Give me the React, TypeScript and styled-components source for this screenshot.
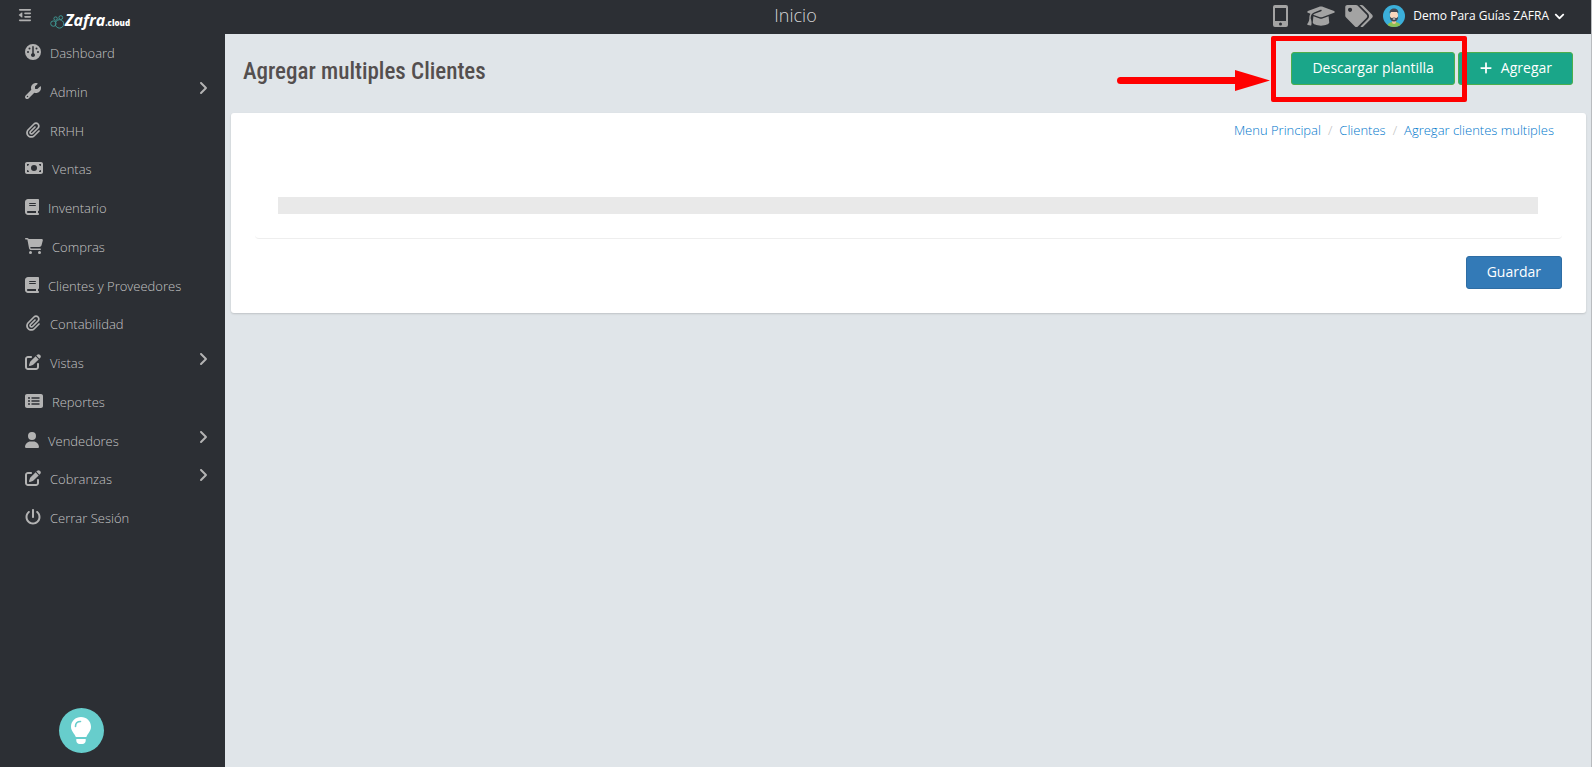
import React from 'react';
import styled, { createGlobalStyle } from 'styled-components';
import type { IconType } from 'react-icons';
import {
  FaOutdent, FaGauge, FaWrench, FaPaperclip, FaMoneyBill, FaBook, FaCartShopping,
  FaPenToSquare, FaRectangleList, FaUser, FaPowerOff, FaAngleRight,
  FaGraduationCap, FaPlus,
} from 'react-icons/fa6';
import { FaTags, FaChevronDown } from 'react-icons/fa';

const GlobalStyle = createGlobalStyle`
  *, *::before, *::after { box-sizing: border-box; }
  body {
    margin: 0;
    background: #e0e5e9;
    font-family: 'Open Sans', 'Noto Sans', sans-serif;
    font-size: 13px;
    line-height: 20px;
  }
  a { text-decoration: none; }
  button { font-family: inherit; cursor: pointer; }
`;

const Page = styled.div`
  min-height: 100vh;
  display: flex;
  flex-direction: column;
  border-right: 1px solid #b9bcbf;
`;

const TopBar = styled.header`
  display: grid;
  grid-template-columns: 1fr auto 1fr;
  height: 34px;
  background: #2c2f34;
`;

const Brand = styled.div`
  display: flex;
  align-items: flex-start;
  padding-left: 18px;
  gap: 18px;
`;

const CollapseButton = styled.button`
  display: flex;
  margin-top: 8px;
  padding: 0;
  border: 0;
  background: none;
  color: #b0b0b0;
  font-size: 14px;
`;

const Logo = styled.a`
  display: flex;
  align-items: baseline;
  margin-top: 8px;
  line-height: 24px;
  color: #fff;
`;

const LogoMark = styled.svg`
  width: 15px;
  height: 14px;
  align-self: center;
`;

const LogoName = styled.span`
  font-size: 16px;
  font-weight: 700;
  font-style: italic;
`;

const LogoSuffix = styled.span`
  font-size: 8px;
  font-weight: 800;
`;

const Section = styled.div`
  color: #d6d6d6;
  font-size: 18px;
  font-weight: 300;
  line-height: 30px;
`;

const Tools = styled.div`
  display: flex;
  justify-content: flex-end;
  align-items: center;
  height: 32px;
  padding-right: 26px;
`;

const ToolLink = styled.a<{ $width: number; $gap: number }>`
  display: flex;
  margin-right: ${(p) => p.$gap}px;
  color: #a3a3a3;
  svg { width: ${(p) => p.$width}px; height: 22px; }
`;

const UserButton = styled.button`
  display: flex;
  align-items: center;
  padding: 0;
  border: 0;
  background: none;
  color: #fff;
  font-size: 12px;
  line-height: 20px;
  svg:first-child { width: 22px; height: 22px; }
  svg:last-child { width: 11px; height: 11px; }
`;

const UserName = styled.span`
  padding: 0 5px 0 8px;
`;

const Body = styled.div`
  display: flex;
  flex: 1;
`;

const Sidebar = styled.aside`
  display: flex;
  flex-direction: column;
  justify-content: space-between;
  flex: 0 0 225px;
  background: #2c2f34;
`;

const Menu = styled.ul`
  display: flex;
  flex-direction: column;
  height: 504px;
  margin: 0;
  padding: 0;
  list-style: none;
`;

const MenuItem = styled.li`
  flex: 1;
`;

const MenuLink = styled.a`
  display: flex;
  align-items: center;
  height: 36px;
  padding: 0 17px 0 25px;
  color: #c4c4c4;
  font-weight: 300;
`;

const MenuIcon = styled.span<{ $width: number }>`
  display: flex;
  margin-right: 9px;
  color: #b3b3b3;
  svg { width: ${(p) => p.$width}px; height: 16px; }
`;

const MenuLabel = styled.span`
  flex: 1;
  padding-top: 2px;
`;

const MenuArrow = styled.span`
  display: flex;
  padding-bottom: 6px;
  color: #b3b3b3;
  svg { width: 10px; height: 16px; }
`;

const HelpButton = styled.button`
  width: 45px;
  height: 45px;
  margin: 0 0 14px 59px;
  padding: 0;
  border: 0;
  border-radius: 50%;
  background: #67cdcc;
  svg { display: block; width: 45px; height: 45px; }
`;

const Main = styled.main`
  flex: 1;
  min-width: 0;
  padding: 0 5px 0 6px;
`;

const PageHead = styled.div`
  display: flex;
  justify-content: space-between;
  height: 79px;
  padding: 18px 13px 0 12px;
`;

const Title = styled.h1`
  margin: 4px 0 0;
  color: #544f4f;
  font-family: 'Roboto Condensed', 'Open Sans Condensed', 'Liberation Sans Narrow', sans-serif;
  font-size: 23px;
  font-weight: 500;
  line-height: 32px;
`;

const Actions = styled.div`
  position: relative;
  display: flex;
  align-items: flex-start;
  gap: 3px;
`;

const Button = styled.button<{ $tone: 'green' | 'blue' }>`
  display: flex;
  align-items: center;
  height: 33px;
  padding: 0 20px 2px;
  border: 1px solid ${(p) => (p.$tone === 'green' ? '#4cae4c' : '#2e6da4')};
  border-radius: 3px;
  background: ${(p) => (p.$tone === 'green' ? '#1aa689' : '#337ab7')};
  color: #fff;
  font-size: 14px;
  line-height: 20px;
  svg { width: 14px; height: 14px; margin-right: 8px; }
`;

const Highlight = styled.div`
  position: absolute;
  top: -16px;
  right: 106px;
  width: 196px;
  height: 66px;
  border: 5px solid #f00;
  border-radius: 2px;
  pointer-events: none;
`;

const Arrow = styled.svg`
  position: absolute;
  top: 18px;
  right: 303px;
  width: 153px;
  height: 21px;
  pointer-events: none;
`;

const Card = styled.section`
  padding: 7px 24px 24px;
  border-radius: 3px;
  background: #fff;
  box-shadow: 0 1px 2px rgba(0, 0, 0, 0.15);
`;

const Breadcrumb = styled.nav`
  display: flex;
  justify-content: flex-end;
  padding-right: 8px;
  font-weight: 300;
  a { color: #0078cc; }
  a + a::before {
    content: '/';
    padding: 0 7px;
    color: #bbb;
  }
`;

const Panel = styled.div`
  margin: 39px 0 17px;
  padding: 18px 24px 24px 23px;
  border-bottom: 1px solid #eee;
  border-radius: 4px;
`;

const EmptyStrip = styled.div`
  height: 17px;
  background: #e9e9e9;
`;

const Footer = styled.div`
  display: flex;
  justify-content: flex-end;
`;

interface Entry {
  label: string;
  icon: IconType;
  width: number;
  nested?: boolean;
}

const entries: Entry[] = [
  { label: 'Dashboard', icon: FaGauge, width: 16 },
  { label: 'Admin', icon: FaWrench, width: 16, nested: true },
  { label: 'RRHH', icon: FaPaperclip, width: 16 },
  { label: 'Ventas', icon: FaMoneyBill, width: 18 },
  { label: 'Inventario', icon: FaBook, width: 14 },
  { label: 'Compras', icon: FaCartShopping, width: 18 },
  { label: 'Clientes y Proveedores', icon: FaBook, width: 14 },
  { label: 'Contabilidad', icon: FaPaperclip, width: 16 },
  { label: 'Vistas', icon: FaPenToSquare, width: 16, nested: true },
  { label: 'Reportes', icon: FaRectangleList, width: 18 },
  { label: 'Vendedores', icon: FaUser, width: 14, nested: true },
  { label: 'Cobranzas', icon: FaPenToSquare, width: 16, nested: true },
  { label: 'Cerrar Sesión', icon: FaPowerOff, width: 16 },
];

const Phone = () => (
  <svg viewBox="0 0 15 22" aria-hidden="true">
    <path fill="currentColor" fillRule="evenodd" d="M2 0h11a2 2 0 0 1 2 2v18a2 2 0 0 1-2 2H2a2 2 0 0 1-2-2V2a2 2 0 0 1 2-2zm0 3v13h11V3zm5.500 14.500a1.500 1.500 0 1 0 0 3 1.500 1.500 0 0 0 0-3z" />
  </svg>
);

const Avatar = () => (
  <svg viewBox="0 0 22 22" aria-hidden="true">
    <defs>
      <clipPath id="avatar-disc"><circle cx="11" cy="11" r="11" /></clipPath>
    </defs>
    <g clipPath="url(#avatar-disc)">
      <rect width="22" height="22" fill="#3bafda" />
      <path d="M4 22c0-3.500 3-5 7-5s7 1.500 7 5z" fill="#8cc152" />
      <path d="M9 14h4v3a2 2 0 0 1-4 0z" fill="#f0c3a0" />
      <ellipse cx="11" cy="10.500" rx="4" ry="5.500" fill="#fad7bd" />
      <path d="M6.800 11.500c1 1 1.700 1.500 2.200 1.500l2-.5 2 .5c.5 0 1.200-.5 2.200-1.500 0 3.300-1.700 5-4.200 5s-4.200-1.700-4.200-5z" fill="#434a54" />
      <path d="M6.700 8.500C6.200 5 8.300 3.500 11 3.500s4.800 1.500 4.300 5L14 7H8z" fill="#434a54" />
      <rect x="9.800" y="13.500" width="2.400" height="1" fill="#fff" />
    </g>
  </svg>
);

const Bulb = () => (
  <svg viewBox="0 0 45 45" aria-hidden="true">
    <path fill="#fff" d="M22 9c5.500 0 10 4.200 10 9.700 0 4.800-3.400 6.500-4.600 10.300H16.800C15.600 25.200 12 23.500 12 18.700 12 13.200 16.500 9 22 9z" />
    <path fill="#fff" d="M17.300 31h9.400v1.500c0 2-1.500 3.500-3.200 3.500h-3c-1.700 0-3.200-1.500-3.200-3.500z" />
    <path fill="none" stroke="#67cdcc" strokeWidth="1.600" strokeLinecap="round" d="M16.500 18.500c0-3 2-5 5-5" />
  </svg>
);

const Rings = () => (
  <LogoMark viewBox="0 0 15 14" aria-hidden="true">
    <g fill="none" stroke="#3f9692" strokeWidth="1">
      <circle cx="3.400" cy="8.600" r="2.700" />
      <circle cx="9.500" cy="8.900" r="4.200" />
      <circle cx="5.600" cy="3.600" r="1.700" />
      <circle cx="10.800" cy="2.600" r="1.900" />
    </g>
  </LogoMark>
);

export default function App() {
  return (
    <>
      <GlobalStyle />
      <Page>
        <TopBar>
          <Brand>
            <CollapseButton aria-label="Contraer menú"><FaOutdent /></CollapseButton>
            <Logo href="#">
              <Rings />
              <LogoName>Zafra</LogoName>
              <LogoSuffix>.cloud</LogoSuffix>
            </Logo>
          </Brand>
          <Section>Inicio</Section>
          <Tools>
            <ToolLink href="#" aria-label="Móvil" $width={15} $gap={19}><Phone /></ToolLink>
            <ToolLink href="#" aria-label="Cursos" $width={28} $gap={10}><FaGraduationCap /></ToolLink>
            <ToolLink href="#" aria-label="Etiquetas" $width={28} $gap={10}><FaTags /></ToolLink>
            <UserButton>
              <Avatar />
              <UserName>Demo Para Guías ZAFRA</UserName>
              <FaChevronDown />
            </UserButton>
          </Tools>
        </TopBar>
        <Body>
          <Sidebar>
            <Menu>
              {entries.map(({ label, icon: Icon, width, nested }) => (
                <MenuItem key={label}>
                  <MenuLink href="#">
                    <MenuIcon $width={width}><Icon /></MenuIcon>
                    <MenuLabel>{label}</MenuLabel>
                    {nested && <MenuArrow><FaAngleRight /></MenuArrow>}
                  </MenuLink>
                </MenuItem>
              ))}
            </Menu>
            <HelpButton aria-label="Ayuda"><Bulb /></HelpButton>
          </Sidebar>
          <Main>
            <PageHead>
              <Title>Agregar multiples Clientes</Title>
              <Actions>
                <Button $tone="green">Descargar plantilla</Button>
                <Button $tone="green"><FaPlus />Agregar</Button>
                <Highlight />
                <Arrow viewBox="0 0 153 21" aria-hidden="true">
                  <path d="M3.500 10.500H120" stroke="#f00" strokeWidth="7" strokeLinecap="round" />
                  <path d="M118 0l35 10.500L118 21z" fill="#f00" />
                </Arrow>
              </Actions>
            </PageHead>
            <Card>
              <Breadcrumb aria-label="Ruta">
                <a href="#">Menu Principal</a>
                <a href="#">Clientes</a>
                <a href="#">Agregar clientes multiples</a>
              </Breadcrumb>
              <Panel><EmptyStrip /></Panel>
              <Footer><Button $tone="blue">Guardar</Button></Footer>
            </Card>
          </Main>
        </Body>
      </Page>
    </>
  );
}
